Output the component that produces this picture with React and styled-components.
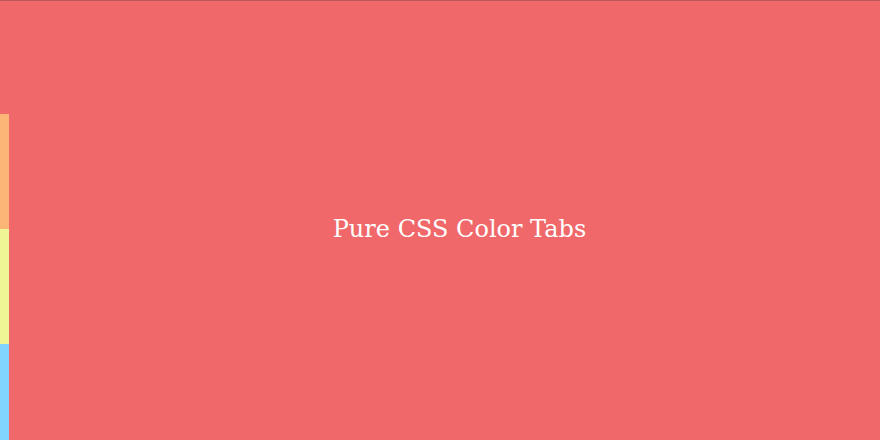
import React, { useState } from "react";
import styled, { createGlobalStyle } from "styled-components";

const tabs = [
  { id: "red", color: "#f0686a", title: "Pure CSS Color Tabs" },
  { id: "orange", color: "#fbb577", title: "Orange" },
  { id: "yellow", color: "#eef594", title: "Yellow" },
  { id: "blue", color: "#80d4fe", title: "Blue" },
];

export default function App() {
  const [active, setActive] = useState(0);
  const current = tabs[active];

  return (
    <>
      <GlobalStyle />
      <Wrapper>
        <TabList>
          {tabs.map((tab, i) => (
            <Tab
              key={tab.id}
              $color={tab.color}
              aria-label={tab.id}
              onClick={() => setActive(i)}
            />
          ))}
        </TabList>
        <Panel $color={current.color}>
          <Title>{current.title}</Title>
        </Panel>
      </Wrapper>
    </>
  );
}

const GlobalStyle = createGlobalStyle`
  html, body {
    margin: 0;
    padding: 0;
    overflow: hidden;
    background: #f0686a;
  }
`;

const Wrapper = styled.div`
  position: relative;
  display: flex;
  margin-top: -1px;

  /* thin shadow line along the top edge */
  &::before {
    content: "";
    position: absolute;
    top: 1px;
    left: 0;
    right: 0;
    height: 1px;
    background: #b85a5c;
  }
`;

const TabList = styled.div`
  display: flex;
  flex-direction: column;
  width: 9px;
  flex-shrink: 0;
`;

const Tab = styled.button`
  display: block;
  height: 115px;
  width: 9px;
  padding: 0;
  border: 0;
  background: ${(p) => p.$color};
  cursor: pointer;
`;

const Panel = styled.section`
  flex: 1;
  display: flex;
  align-items: center;
  justify-content: center;
  padding-left: 30px;
  background: ${(p) => p.$color};
`;

const Title = styled.h1`
  margin: 0;
  font-family: "DejaVu Serif", "Liberation Serif", serif;
  font-size: 24px;
  font-weight: normal;
  color: #ffffff;
`;
